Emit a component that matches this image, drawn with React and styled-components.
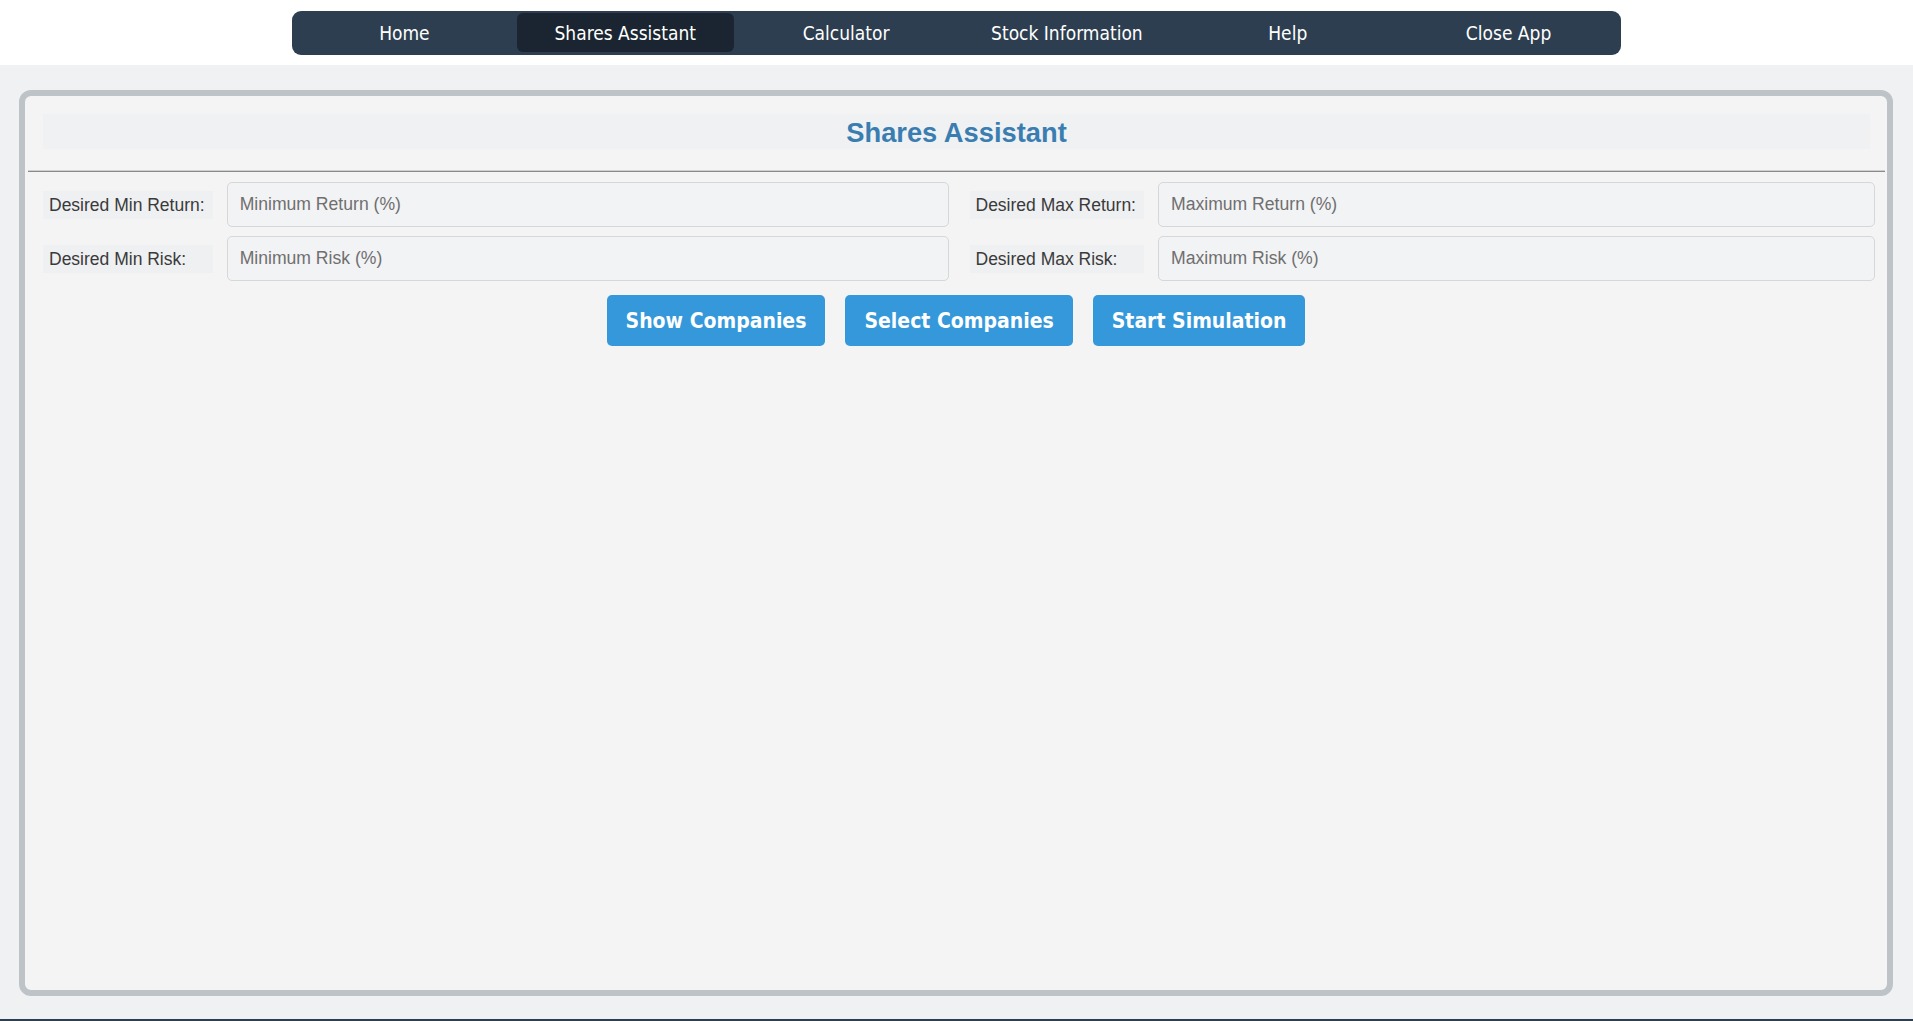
import React from "react";
import styled, { createGlobalStyle } from "styled-components";

const GlobalStyle = createGlobalStyle`
    html, body {
        margin: 0;
        padding: 0;
        background: #f0f1f3;
        font-family: "Liberation Sans", Arial, sans-serif;
    }
    * { box-sizing: border-box; }
`;

const Header = styled.header`
    background: #ffffff;
    height: 65px;
    padding-top: 11px;
`;

const NavBar = styled.nav`
    width: 1329px;
    height: 44px;
    margin: 0 auto;
    background: #2c3e50;
    border-radius: 9px;
    display: grid;
    grid-template-columns: repeat(6, 1fr);
    padding: 2px 2px 3px;
`;

const NavItem = styled.a`
    display: flex;
    align-items: center;
    justify-content: center;
    margin: 0 2px;
    border-radius: 6px;
    color: #ffffff;
    text-decoration: none;
    font-family: "DejaVu Sans Condensed", "DejaVu Sans", sans-serif;
    font-size: 19px;
    background: ${props => props.active ? '#1a2531' : 'transparent'};
    cursor: pointer;
`;

const Main = styled.main`
    padding: 25px 20px 23px 19px;
`;

const Panel = styled.section`
    height: 906px;
    border: 6px solid #bdc3c7;
    border-radius: 12px;
    background: #f4f4f4;
    padding-top: 18px;
`;

const TitleBox = styled.div`
    margin: 0 17px 0 18px;
    height: 35px;
    padding-top: 3px;
    background: #f0f1f3;
    text-align: center;
`;

const Title = styled.h1`
    margin: 0;
    line-height: 32px;
    font-size: 27.3px;
    font-weight: bold;
    color: #3a7eb1;
`;

const Rule = styled.hr`
    margin: 21px 2px 0 3px;
    height: 0;
    border: none;
    border-top: 1px solid #cfcfcf;
    border-bottom: 1px solid #8a8a8a;
`;

const Form = styled.div`
    margin-top: 10px;
    padding: 0 12px 0 18px;
    display: grid;
    grid-template-columns: 1fr 1fr;
    column-gap: 21px;
`;

const FieldGroup = styled.div`
    display: grid;
    grid-template-columns: auto 1fr;
    column-gap: 14px;
    row-gap: 9px;
    align-items: center;
`;

const Label = styled.label`
    height: 28px;
    line-height: 29px;
    padding: 0 8px 0 6px;
    background: #eff0f2;
    color: #3a3a3a;
    font-size: 17.5px;
    white-space: nowrap;
`;

const Input = styled.input`
    height: 45px;
    padding: 0 12px;
    border: 1px solid #d6d7d9;
    border-radius: 5px;
    background: #f2f3f5;
    font-family: "Liberation Sans", Arial, sans-serif;
    font-size: 17.6px;
    color: #333333;
    outline: none;
    &::placeholder {
        color: #6f6f6f;
    }
`;

const ButtonRow = styled.div`
    margin-top: 14px;
    display: flex;
    justify-content: center;
    gap: 20px;
`;

const Button = styled.button`
    height: 51px;
    padding: 0 19px;
    border: none;
    border-radius: 5px;
    background: #3498db;
    color: #ffffff;
    font-family: "DejaVu Sans Condensed", "DejaVu Sans", sans-serif;
    font-weight: bold;
    font-size: 21px;
    cursor: pointer;
`;

const Footer = styled.footer`
    height: 40px;
    background: #2c3e50;
`;

const navItems = ["Home", "Shares Assistant", "Calculator", "Stock Information", "Help", "Close App"];

export default function App() {
    return (
        <>
            <GlobalStyle />
            <Header>
                <NavBar>
                    {navItems.map(item => (
                        <NavItem key={item} active={item === "Shares Assistant" ? 1 : 0}>{item}</NavItem>
                    ))}
                </NavBar>
            </Header>
            <Main>
                <Panel>
                    <TitleBox>
                        <Title>Shares Assistant</Title>
                    </TitleBox>
                    <Rule />
                    <Form>
                        <FieldGroup>
                            <Label>Desired Min Return:</Label>
                            <Input placeholder="Minimum Return (%)" />
                            <Label>Desired Min Risk:</Label>
                            <Input placeholder="Minimum Risk (%)" />
                        </FieldGroup>
                        <FieldGroup>
                            <Label>Desired Max Return:</Label>
                            <Input placeholder="Maximum Return (%)" />
                            <Label>Desired Max Risk:</Label>
                            <Input placeholder="Maximum Risk (%)" />
                        </FieldGroup>
                    </Form>
                    <ButtonRow>
                        <Button>Show Companies</Button>
                        <Button>Select Companies</Button>
                        <Button>Start Simulation</Button>
                    </ButtonRow>
                </Panel>
            </Main>
            <Footer />
        </>
    );
}
